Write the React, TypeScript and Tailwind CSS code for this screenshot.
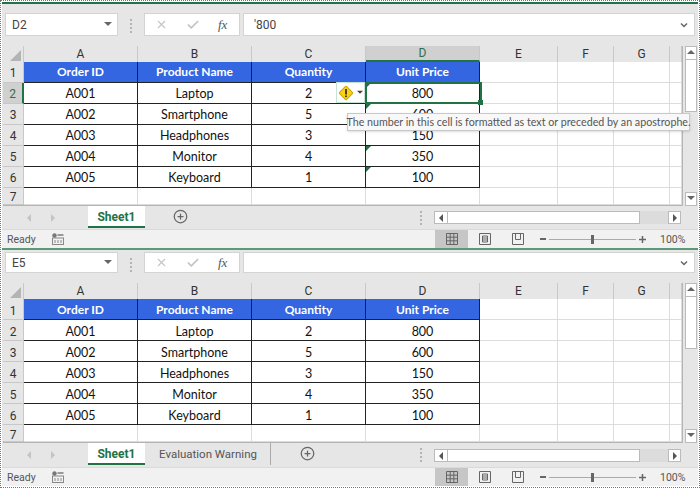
import { Check, CirclePlus, X } from "lucide-react";

const colWidths = [
  "w-[114px]",
  "w-[114px]",
  "w-[114px]",
  "w-[114px]",
  "w-[78px]",
  "w-[56px]",
  "w-[56px]",
  "w-[12px]",
];
const colNames = ["A", "B", "C", "D", "E", "F", "G", ""];

const rows = [
  ["Order ID", "Product Name", "Quantity", "Unit Price"],
  ["A001", "Laptop", "2", "800"],
  ["A002", "Smartphone", "5", "600"],
  ["A003", "Headphones", "3", "150"],
  ["A004", "Monitor", "4", "350"],
  ["A005", "Keyboard", "1", "100"],
];

function Caret({ dir = "down", className = "" }: { dir?: "down" | "up" | "left" | "right"; className?: string }) {
  const points = {
    down: "0,1 8,1 4,5",
    up: "0,5 8,5 4,1",
    left: "6,0 6,8 2,4",
    right: "2,0 2,8 6,4",
  }[dir];
  return (
    <svg viewBox="0 0 8 8" className={`w-2 h-2 fill-current ${className}`}>
      <polygon points={points} />
    </svg>
  );
}

function Grip({ className = "" }: { className?: string }) {
  return (
    <div className={`flex flex-col gap-[2px] ${className}`}>
      <span className="w-[2px] h-[2px] bg-[#b4b4b4]" />
      <span className="w-[2px] h-[2px] bg-[#b4b4b4]" />
      <span className="w-[2px] h-[2px] bg-[#b4b4b4]" />
      <span className="w-[2px] h-[2px] bg-[#b4b4b4]" />
    </div>
  );
}

function FormulaBar({ name, formula, top, box }: { name: string; formula: string; top: string; box: string }) {
  return (
    <div className={`flex items-start ${top} pl-[3px] pr-[3px] font-['Roboto',sans-serif]`}>
      <div className={`w-[113px] ${box} bg-white border border-[#d4d4d4] flex items-center justify-between pl-[6px] pr-[5px] text-[12px] text-[#444]`}>
        {name}
        <Caret className="text-[#666]" />
      </div>
      <Grip className="ml-[12px] mt-[6px]" />
      <div className={`ml-[12px] w-[96px] ${box} bg-white border border-[#d4d4d4] flex items-center pl-[10px] text-[#c4c4c4]`}>
        <X className="w-[13px] h-[13px]" strokeWidth={2} />
        <Check className="w-[14px] h-[14px] ml-[18px]" strokeWidth={3} />
        <span className="ml-[18px] font-['Liberation_Serif',serif] italic text-[13px] leading-none text-[#555]">
          fx
        </span>
      </div>
      <div className={`ml-[3px] flex-1 ${box} bg-white border border-[#d4d4d4] flex items-center pl-[10px] pr-[6px] text-[12px] text-[#444]`}>
        {formula}
        <svg viewBox="0 0 8 8" className="ml-auto w-2 h-2 stroke-[#666] fill-none" strokeWidth={1.5}>
          <polyline points="1,2.5 4,5.5 7,2.5" />
        </svg>
      </div>
    </div>
  );
}

function ColumnHeaders({ active }: { active: boolean }) {
  return (
    <div className="flex h-[16px] font-['Roboto',sans-serif]">
      <div className="w-[21px] shrink-0 border-r border-[#c8c8c8] flex items-end justify-end pr-[2px] pb-[1px]">
        <div className="w-[11px] h-[11px] bg-[#b4b4b4] [clip-path:polygon(100%_0,100%_100%,0_100%)]" />
      </div>
      {colNames.map((c, i) => (
        <div
          key={i}
          className={`${colWidths[i]} shrink-0 flex items-center justify-center text-[12px] border-r border-[#c8c8c8] ${
            active && i === 3
              ? "bg-[#d0d0d0] text-[#2f6f4f] border-b-2 border-b-[#217346]"
              : "text-[#333]"
          }`}
        >
          {c}
        </div>
      ))}
    </div>
  );
}

function Row({ index, data, active, top }: { index: number; data?: string[]; active: boolean; top: boolean }) {
  const isHead = index === 0;
  const selected = active && index === 1;
  // the text of the two panes does not sit at the same height in the picture
  const numPad = top ? "pt-[2px]" : "pt-[4px]";
  const headPad = top ? "pt-0" : "pt-[2px]";
  const cellPad = top ? "pt-[2px]" : "pt-[4px]";
  return (
    <div className={`flex ${data ? "h-[21px]" : "h-[17px]"}`}>
      <div
        className={`w-[21px] shrink-0 flex items-center justify-center ${numPad} text-[12px] font-['Roboto',sans-serif] border-b border-[#c8c8c8] ${
          selected
            ? "bg-[#d0d0d0] text-[#2f6f4f] border-r-2 border-r-[#217346]"
            : "border-r border-r-[#c8c8c8] text-[#333]"
        }`}
      >
        {index + 1}
      </div>
      {colNames.map((_, i) => {
        const text = data && data[i];
        if (text !== undefined && i < 4) {
          return (
            <div
              key={i}
              className={`${colWidths[i]} shrink-0 relative flex items-center justify-center border-r border-b border-[#222] ${
                isHead ? `bg-[#3366e0] text-white font-bold text-[12px] ${headPad}` : `bg-white text-[#111] text-[12.5px] ${cellPad}`
              }`}
            >
              {text}
              {active && i === 3 && !isHead && (
                <span className="absolute left-0 top-0 w-[5px] h-[5px] bg-[#217346] [clip-path:polygon(0_0,100%_0,0_100%)]" />
              )}
            </div>
          );
        }
        return (
          <div key={i} className={`${colWidths[i]} shrink-0 bg-white border-r border-b border-[#dcdcdc]`} />
        );
      })}
    </div>
  );
}

function VScroll() {
  return (
    <div className="ml-[2px] w-[14px] flex flex-col">
      <div className="h-[14px] bg-white border border-[#bbb] flex items-center justify-center text-[#666]">
        <Caret dir="up" />
      </div>
      <div className="h-[52px] bg-white border-x border-b border-[#bbb]" />
      <div className="flex-1" />
      <div className="h-[14px] bg-white border border-[#bbb] flex items-center justify-center text-[#666]">
        <Caret />
      </div>
    </div>
  );
}

function HScroll() {
  return (
    <div className="flex h-[13px] w-[247px] shrink-0 bg-[#dcdcdc]">
      <div className="w-[14px] bg-white border border-[#bbb] flex items-center justify-center text-[#555]">
        <Caret dir="left" />
      </div>
      <div className="w-[192px] bg-white border-y border-r border-[#bbb]" />
      <div className="flex-1" />
      <div className="w-[13px] bg-white border border-[#bbb] flex items-center justify-center text-[#555]">
        <Caret dir="right" />
      </div>
    </div>
  );
}

function SheetTabs({ warning }: { warning: boolean }) {
  return (
    <div className={`flex items-start font-['Roboto',sans-serif] ${warning ? "h-[24px]" : "h-[23px]"}`}>
      <Caret dir="left" className="ml-[23px] mt-[8px] text-[#c4c4c4]" />
      <Caret dir="right" className="ml-[16px] mt-[8px] text-[#c4c4c4]" />
      <div className={`ml-[31px] w-[57px] h-[22px] ${warning ? "pt-[2px]" : "pt-[1px]"} bg-white border-b-2 border-[#217346] flex items-center justify-center text-[12px] font-bold text-[#217346]`}>
        Sheet1
      </div>
      {warning ? (
        <>
          <div className="w-[126px] h-[22px] pt-[2px] pl-[1px] flex items-center justify-center text-[11.5px] text-[#555] border-r border-[#aaa]">
            Evaluation Warning
          </div>
          <CirclePlus className="ml-[29px] mt-[3px] w-[15px] h-[15px] text-[#666]" />
          <Grip className="ml-[105px] mt-[5px]" />
        </>
      ) : (
        <>
          <CirclePlus className="ml-[28px] mt-[3px] w-[15px] h-[15px] text-[#666]" />
          <Grip className="ml-[232px] mt-[5px]" />
        </>
      )}
      <div className={`ml-[12px] ${warning ? "mt-[6px]" : "mt-[5px]"}`}>
        <HScroll />
      </div>
    </div>
  );
}

function StatusBar() {
  return (
    <div className="h-[19px] flex items-center bg-[#f1f1f1] text-[10.5px] text-[#555] font-['Roboto',sans-serif] border-t border-[#dadada]">
      <span className="ml-[5px] w-[45px] pt-[1px]">Ready</span>
      <svg viewBox="0 0 12 12" className="w-[12px] h-[12px]">
        <circle cx="2.5" cy="2.5" r="2.2" fill="#777" />
        <rect x="5.5" y="1" width="6" height="2" fill="#999" />
        <rect x="0.5" y="5" width="11" height="6.5" fill="none" stroke="#888" />
        <path d="M3 7v3M6 7v3M9 7v3" stroke="#888" />
      </svg>
      <div className="ml-[371px] w-[33px] h-full bg-[#c6c6c6] flex items-center justify-center">
        <svg viewBox="0 0 12 12" className="w-[12px] h-[12px] fill-none stroke-[#666]">
          <path d="M.5.5h11v11H.5zM4.2.5v11M7.8.5v11M.5 4.2h11M.5 7.8h11" />
        </svg>
      </div>
      <div className="w-[33px] flex justify-center">
        <svg viewBox="0 0 12 12" className="w-[12px] h-[12px] fill-none stroke-[#666]">
          <path d="M.5.5h11v11H.5zM3.5 3h5v6h-5zM3.5 5h5M3.5 7h5" />
        </svg>
      </div>
      <div className="w-[33px] flex justify-center">
        <svg viewBox="0 0 12 12" className="w-[12px] h-[12px] fill-none stroke-[#666]">
          <path d="M.5.5h11v11H.5zM3.5.5v6h5v-6" />
        </svg>
      </div>
      <span className="ml-[6px] w-[6px] h-[2px] bg-[#666]" />
      <div className="ml-[3px] w-[87px] h-[1px] bg-[#aaa] relative">
        <span className="absolute left-[42px] -top-[4px] w-[3px] h-[9px] bg-[#666]" />
      </div>
      <svg viewBox="0 0 7 7" className="ml-[3px] w-[7px] h-[7px] stroke-[#666]" strokeWidth={1.5}>
        <path d="M0 3.500h7M3.500 0v7" />
      </svg>
      <span className="ml-[14px] pt-[1px]">100%</span>
    </div>
  );
}

function Pane({
  name,
  formula,
  top,
  box,
  active,
  warning,
}: {
  name: string;
  formula: string;
  top: string;
  box: string;
  active: boolean;
  warning: boolean;
}) {
  return (
    <div className="bg-[#e6e6e6] relative">
      <FormulaBar name={name} formula={formula} top={top} box={box} />
      <div className="flex pl-[1px] pr-[1px] font-['Lato',sans-serif] mt-[10px]">
        <div className="border-r border-b border-[#b4b4b4]">
          <ColumnHeaders active={active} />
          {rows.map((r, i) => (
            <Row key={i} index={i} data={r} active={active} top={active} />
          ))}
          <Row index={6} active={false} top={active} />
        </div>
        <VScroll />
      </div>
      <SheetTabs warning={warning} />
      <StatusBar />
      {active && (
        <>
          {/* selected cell D2 */}
          <div className="absolute left-[363px] top-[78px] w-[117px] h-[22px] border-2 border-[#217346]">
            <span className="absolute -right-[3px] -bottom-[3px] w-[5px] h-[5px] bg-[#217346]" />
          </div>
          {/* error smart tag */}
          <div className="absolute left-[334px] top-[78px] w-[29px] h-[21px] bg-white border border-[#c5e3d2] flex items-center pl-[1px]">
            <svg viewBox="0 0 16 16" className="w-[16px] h-[16px]">
              <rect x="3" y="3" width="10" height="10" rx="1" transform="rotate(45 8 8)" fill="#fcd116" stroke="#c9a400" />
              <rect x="7.200" y="4" width="1.600" height="5.500" fill="#222" />
              <rect x="7.200" y="10.500" width="1.600" height="1.600" fill="#222" />
            </svg>
            <Caret className="ml-[3px] w-[6px] h-[6px] text-[#444]" />
          </div>
          {/* tooltip */}
          <div className="absolute left-[345px] top-[109px] h-[18px] w-[343px] pt-[1px] bg-[#f8f8f8] border border-[#c8c8c8] shadow-sm flex items-center justify-center whitespace-nowrap text-[10.7px] text-[#555] font-['Lato',sans-serif]">
            The number in this cell is formatted as text or preceded by an apostrophe.
          </div>
        </>
      )}
    </div>
  );
}

export default function App() {
  return (
    <div className="w-[700px] h-[488px] bg-white border border-dotted border-[#777] p-[1px] overflow-hidden">
      <div className="h-[2px] bg-[#217346]" />
      <Pane name="D2" formula="'800" top="pt-[9px]" box="h-[23px]" active warning={false} />
      <div className="h-[2px] bg-[#5a9a78]" />
      <Pane name="E5" formula="" top="pt-[2px]" box="h-[21px]" active={false} warning />
    </div>
  );
}
